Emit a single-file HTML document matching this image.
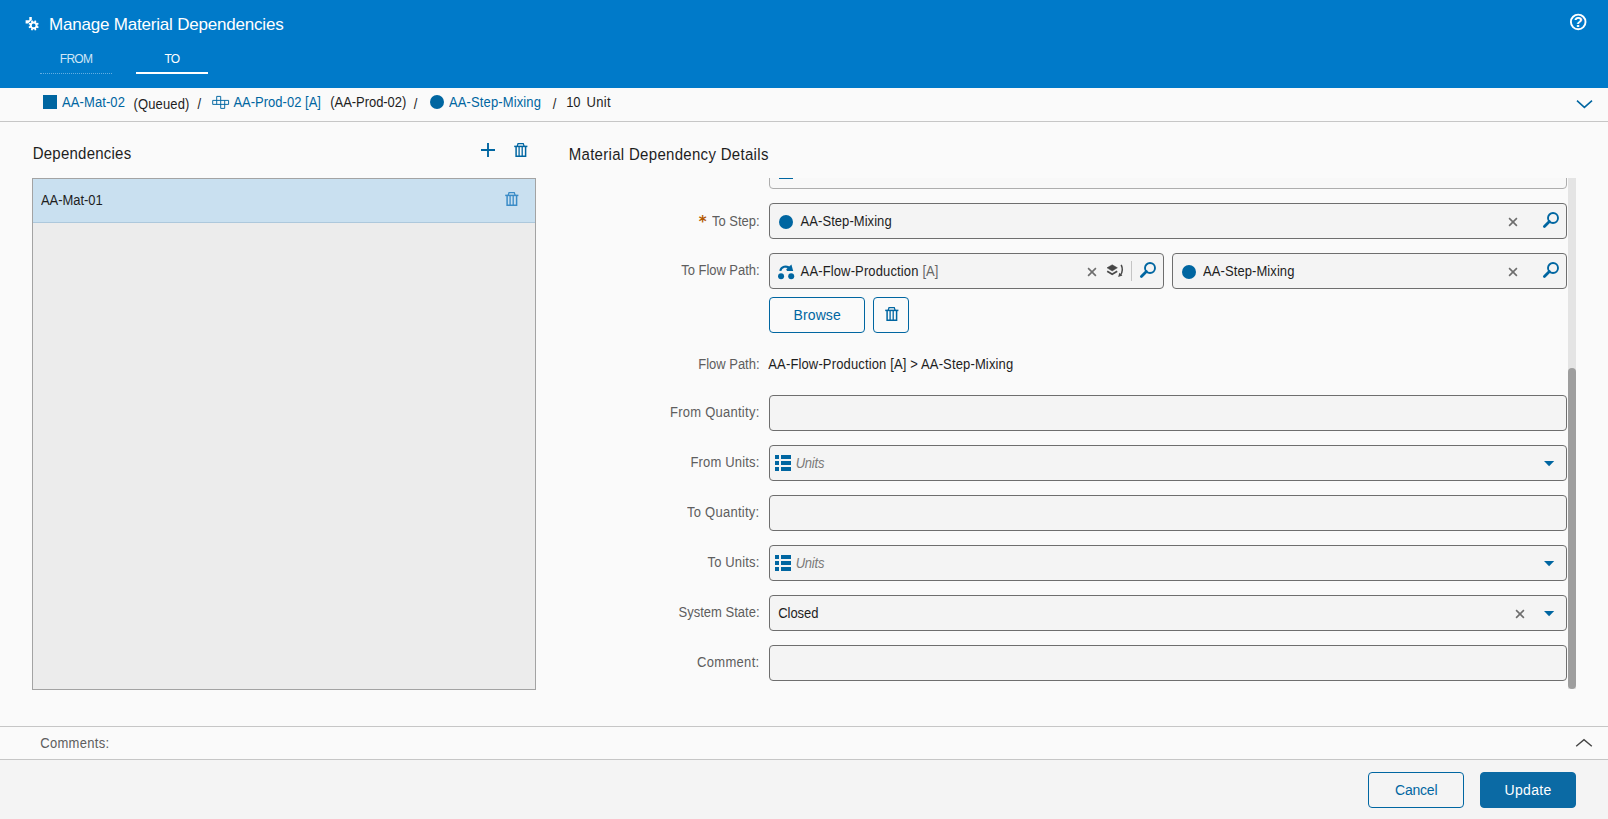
<!DOCTYPE html>
<html><head><meta charset="utf-8"><title>Manage Material Dependencies</title>
<style>
html,body{margin:0;padding:0}
body{width:1608px;height:819px;position:relative;overflow:hidden;background:#fafafa;font-family:"Liberation Sans",sans-serif}
.t{position:absolute;white-space:pre}
.i{position:absolute;display:block}
.f{position:absolute;box-sizing:border-box;border:1px solid #6e6e6e;border-radius:4px;background:#f4f4f4}
.fl{position:absolute;box-sizing:border-box;border:1px solid #adadad;border-radius:4px;background:#f8f8f8}
.b{position:absolute;box-sizing:border-box;border:1px solid #0066a1;border-radius:4px}
.hl{position:absolute;left:0;width:1608px;height:1px;background:#c6c6c6}
</style></head><body>
<div style="position:absolute;left:0;top:0;width:1608px;height:88px;background:#007ac9"></div>
<svg class="i" style="left:20px;top:10px" width="30" height="28" viewBox="20 10 30 28"><path d="M29.3 17.1 H31.8 V20.6 L30.4 21.3 L28.3 23.5 H25.6 V20.2 H29.3 Z" fill="#fff"/><path d="M37.50 26.01 L38.75 26.63 L38.13 28.14 L36.81 27.69 L35.94 28.56 L36.39 29.88 L34.88 30.50 L34.26 29.25 L33.04 29.25 L32.42 30.50 L30.91 29.88 L31.36 28.56 L30.49 27.69 L29.17 28.14 L28.55 26.63 L29.80 26.01 L29.80 24.79 L28.55 24.17 L29.17 22.66 L30.49 23.11 L31.36 22.24 L30.91 20.92 L32.42 20.30 L33.04 21.55 L34.26 21.55 L34.88 20.30 L36.39 20.92 L35.94 22.24 L36.81 23.11 L38.13 22.66 L38.75 24.17 L37.50 24.79Z M35.55 25.40 A1.9 1.9 0 1 0 31.75 25.40 A1.9 1.9 0 1 0 35.55 25.40Z" fill="#fff" fill-rule="evenodd" stroke="#007ac9" stroke-width="0.7" paint-order="stroke"/></svg>
<div style="position:absolute;left:40px;top:73px;width:72px;height:0;border-top:1px dotted #62aee2"></div>
<div style="position:absolute;left:136px;top:72px;width:72px;height:2px;background:#fff"></div>
<svg class="i" style="left:1568px;top:12px" width="20" height="20" viewBox="0 0 20 20"><circle cx="10.2" cy="9.95" r="7.3" fill="none" stroke="#fff" stroke-width="1.9"/><text x="10.2" y="14.6" text-anchor="middle" font-family="Liberation Sans, sans-serif" font-weight="bold" font-size="14.6" fill="#fff">?</text></svg>
<div class="hl" style="top:121px"></div>
<div class="i" style="left:43px;top:95px;width:14px;height:14px;background:#0066a1"></div>
<svg class="i" style="left:211px;top:94px" width="20" height="16" viewBox="211 94 20 16"><path d="M216.7 100.4 V96.4 H220.7 V100.4 M212.7 100.4 H228.6 V104.4 H212.7 Z M216.7 100.4 V104.4 M220.7 100.4 V108.4 H224.7 V100.4" fill="none" stroke="#0066a1" stroke-width="0.95"/></svg>
<div class="i" style="left:430px;top:95.2px;width:14px;height:14px;border-radius:50%;background:#0066a1"></div>
<svg class="i" style="left:1575px;top:98px" width="20" height="12" viewBox="0 0 20 12"><path d="M2 2.6 L9.4 9.4 L17 2.6" fill="none" stroke="#0066a1" stroke-width="1.5"/></svg>

<svg class="i" style="left:480px;top:142px" width="16" height="16" viewBox="0 0 16 16"><path d="M8 1 V15 M1 8 H15" stroke="#0066a1" stroke-width="1.9" fill="none"/></svg>
<svg class="i" style="left:513.8px;top:142.6px;opacity:1" width="14" height="15" viewBox="0 0 14 15"><g fill="none" stroke="#0066a1"><path d="M3.2 3.3 L4 0.7 H9.3 L10.1 3.3" stroke-width="1.2"/><path d="M0.2 3.4 H13.4" stroke-width="1.5"/><path d="M2.1 3.4 V13.3 H11.6 V3.4" stroke-width="1.5"/><path d="M5.1 3.4 V13.3 M8.2 3.4 V13.3" stroke-width="1.3"/></g></svg>
<div style="position:absolute;left:32px;top:178px;width:504px;height:512px;box-sizing:border-box;border:1px solid #a3a3a3;background:#ececec"></div>
<div style="position:absolute;left:33px;top:179px;width:502px;height:43px;background:#c9e0f0;border-bottom:1px solid #adc8dc"></div>
<svg class="i" style="left:504.6px;top:192.4px;opacity:1" width="14" height="15" viewBox="0 0 14 15"><g fill="none" stroke="#3b8cc7"><path d="M3.2 3.3 L4 0.7 H9.3 L10.1 3.3" stroke-width="1.2"/><path d="M0.2 3.4 H13.4" stroke-width="1.5"/><path d="M2.1 3.4 V13.3 H11.6 V3.4" stroke-width="1.5"/><path d="M5.1 3.4 V13.3 M8.2 3.4 V13.3" stroke-width="1.3"/></g></svg>

<div class="fl" style="left:769px;top:150px;width:798px;height:39px"></div>
<div class="i" style="left:779px;top:177px;width:14px;height:2.4px;background:#0066a1"></div>
<div style="position:absolute;left:560px;top:140px;width:1040px;height:38px;background:#fafafa"></div>

<div class="f" style="left:769px;top:203px;width:798px;height:36px"></div>
<div class="i" style="left:779.2px;top:214.7px;width:14px;height:14px;border-radius:50%;background:#0066a1"></div>
<svg class="i" style="left:1507px;top:215.8px" width="12" height="12" viewBox="0 0 12 12"><path d="M2.1 2.1 L9.9 9.9 M9.9 2.1 L2.1 9.9" stroke="#6e6e6e" stroke-width="1.6" fill="none"/></svg>
<svg class="i" style="left:1541px;top:209.8px" width="20" height="20" viewBox="0 0 20 20"><circle cx="12" cy="8" r="5" fill="none" stroke="#0066a1" stroke-width="1.9"/><path d="M8.4 11.6 L3.4 16.6" stroke="#0066a1" stroke-width="2.8" stroke-linecap="round"/></svg>
<div class="f" style="left:769px;top:253px;width:395px;height:36px"></div>
<svg class="i" style="left:776px;top:262px" width="20" height="20" viewBox="776 262 20 20"><circle cx="781.05" cy="276.3" r="3" fill="#0066a1"/><circle cx="791.2" cy="276.3" r="3" fill="#0066a1"/><path d="M780.3 270.9 C781 266.5 786.5 265.3 790 268.2" fill="none" stroke="#0066a1" stroke-width="2.1"/><path d="M791.4 264.6 L793.2 271.1 L787 270.9 L786.2 269.3 Z" fill="#0066a1"/></svg>
<svg class="i" style="left:1085.7px;top:265.8px" width="12" height="12" viewBox="0 0 12 12"><path d="M2.1 2.1 L9.9 9.9 M9.9 2.1 L2.1 9.9" stroke="#6e6e6e" stroke-width="1.6" fill="none"/></svg>
<svg class="i" style="left:1104px;top:262px" width="22" height="18" viewBox="1104 262 22 18"><path d="M1107 267.8 L1112.2 264.8 L1117.4 267.8 L1112.2 271 Z" fill="#454545" stroke="#454545" stroke-width="0.5"/><path d="M1107.2 271.3 L1112.2 274.3 L1117.2 271.3" fill="none" stroke="#4a4a4a" stroke-width="1.8"/><path d="M1121.2 264.9 C1122.9 268.5 1122.5 272.3 1120.4 275.2" fill="none" stroke="#4a4a4a" stroke-width="1.5"/><path d="M1118.2 277 L1119.3 272.8 L1122.4 275.4 Z" fill="#4a4a4a"/></svg>
<div class="i" style="left:1131px;top:261px;width:1px;height:20px;background:#c4c4c4"></div>
<svg class="i" style="left:1138px;top:260.0px" width="20" height="20" viewBox="0 0 20 20"><circle cx="12" cy="8" r="5" fill="none" stroke="#0066a1" stroke-width="1.9"/><path d="M8.4 11.6 L3.4 16.6" stroke="#0066a1" stroke-width="2.8" stroke-linecap="round"/></svg>
<div class="f" style="left:1172px;top:253px;width:395px;height:36px"></div>
<div class="i" style="left:1182px;top:264.7px;width:14px;height:14px;border-radius:50%;background:#0066a1"></div>
<svg class="i" style="left:1507px;top:265.8px" width="12" height="12" viewBox="0 0 12 12"><path d="M2.1 2.1 L9.9 9.9 M9.9 2.1 L2.1 9.9" stroke="#6e6e6e" stroke-width="1.6" fill="none"/></svg>
<svg class="i" style="left:1541px;top:259.8px" width="20" height="20" viewBox="0 0 20 20"><circle cx="12" cy="8" r="5" fill="none" stroke="#0066a1" stroke-width="1.9"/><path d="M8.4 11.6 L3.4 16.6" stroke="#0066a1" stroke-width="2.8" stroke-linecap="round"/></svg>
<div class="b" style="left:769px;top:297px;width:96px;height:36px"></div>
<div class="b" style="left:873px;top:297px;width:36px;height:36px"></div>
<svg class="i" style="left:884.8px;top:306.6px;opacity:1" width="14" height="15" viewBox="0 0 14 15"><g fill="none" stroke="#0066a1"><path d="M3.2 3.3 L4 0.7 H9.3 L10.1 3.3" stroke-width="1.2"/><path d="M0.2 3.4 H13.4" stroke-width="1.5"/><path d="M2.1 3.4 V13.3 H11.6 V3.4" stroke-width="1.5"/><path d="M5.1 3.4 V13.3 M8.2 3.4 V13.3" stroke-width="1.3"/></g></svg>
<div class="f" style="left:769px;top:395px;width:798px;height:36px"></div>
<div class="f" style="left:769px;top:445px;width:798px;height:36px"></div>
<svg class="i" style="left:775px;top:455px" width="16" height="16" viewBox="0 0 16 16" fill="#0066a1"><rect x="0" y="0" width="4" height="4"/><rect x="6" y="0" width="10" height="4"/><rect x="0" y="6" width="4" height="4"/><rect x="6" y="6" width="10" height="4"/><rect x="0" y="12" width="4" height="4"/><rect x="6" y="12" width="10" height="4"/></svg>
<svg class="i" style="left:1544px;top:461px" width="11" height="6" viewBox="0 0 11 6"><path d="M0 0 H10.2 L5.1 5.3 Z" fill="#0066a1"/></svg>
<div class="f" style="left:769px;top:495px;width:798px;height:36px"></div>
<div class="f" style="left:769px;top:545px;width:798px;height:36px"></div>
<svg class="i" style="left:775px;top:555px" width="16" height="16" viewBox="0 0 16 16" fill="#0066a1"><rect x="0" y="0" width="4" height="4"/><rect x="6" y="0" width="10" height="4"/><rect x="0" y="6" width="4" height="4"/><rect x="6" y="6" width="10" height="4"/><rect x="0" y="12" width="4" height="4"/><rect x="6" y="12" width="10" height="4"/></svg>
<svg class="i" style="left:1544px;top:561px" width="11" height="6" viewBox="0 0 11 6"><path d="M0 0 H10.2 L5.1 5.3 Z" fill="#0066a1"/></svg>
<div class="f" style="left:769px;top:595px;width:798px;height:36px"></div>
<svg class="i" style="left:1513.5px;top:608.4px" width="12" height="12" viewBox="0 0 12 12"><path d="M2.1 2.1 L9.9 9.9 M9.9 2.1 L2.1 9.9" stroke="#6e6e6e" stroke-width="1.6" fill="none"/></svg>
<svg class="i" style="left:1544px;top:611px" width="11" height="6" viewBox="0 0 11 6"><path d="M0 0 H10.2 L5.1 5.3 Z" fill="#0066a1"/></svg>
<div class="f" style="left:769px;top:645px;width:798px;height:36px"></div>
<div class="i" style="left:1568px;top:178px;width:8px;height:511px;background:#e4e4e4"></div>
<div class="i" style="left:1568px;top:368px;width:8px;height:321px;background:#9e9e9e;border-radius:4px"></div>

<div class="hl" style="top:726px"></div>
<div class="hl" style="top:759px"></div>
<div style="position:absolute;left:0;top:760px;width:1608px;height:59px;background:#f4f4f4"></div>
<svg class="i" style="left:1574px;top:736px" width="20" height="14" viewBox="0 0 20 14"><path d="M2.2 10.2 L10 3.6 L17.8 10.2" fill="none" stroke="#444" stroke-width="1.4"/></svg>
<div class="b" style="left:1368px;top:772px;width:96px;height:36px"></div>
<div class="b" style="left:1480px;top:772px;width:96px;height:36px;background:#0b6aa4;border-color:#0b6aa4"></div>
<div class="t" id="title" style="left:49.00px;top:16px;font-size:17px;line-height:17px;color:#fff;letter-spacing:-0.198px;">Manage Material Dependencies</div>
<div class="t" id="from" style="left:59.80px;top:53px;font-size:12px;line-height:12px;color:#cfe6f6;letter-spacing:-0.732px;">FROM</div>
<div class="t" id="to" style="left:164.50px;top:53px;font-size:12px;line-height:12px;color:#fff;letter-spacing:-0.827px;">TO</div>
<div class="t" id="b1" style="left:62.00px;top:96px;font-size:13px;line-height:13px;color:#0066a1;letter-spacing:0.095px;transform:scaleY(1.075);transform-origin:0 11px;">AA-Mat-02</div>
<div class="t" id="b2" style="left:133.50px;top:98px;font-size:13px;line-height:13px;color:#1e1e1e;letter-spacing:0.135px;transform:scaleY(1.075);transform-origin:0 11px;">(Queued)</div>
<div class="t" id="b3" style="left:197.60px;top:98px;font-size:13px;line-height:13px;color:#1e1e1e;letter-spacing:1.375px;transform:scaleY(1.075);transform-origin:0 11px;">/</div>
<div class="t" id="b4" style="left:233.40px;top:96px;font-size:13px;line-height:13px;color:#0066a1;letter-spacing:0.012px;transform:scaleY(1.075);transform-origin:0 11px;">AA-Prod-02 [A]</div>
<div class="t" id="b5" style="left:330.30px;top:96px;font-size:13px;line-height:13px;color:#1e1e1e;letter-spacing:-0.057px;transform:scaleY(1.075);transform-origin:0 11px;">(AA-Prod-02)</div>
<div class="t" id="b6" style="left:413.80px;top:98px;font-size:13px;line-height:13px;color:#1e1e1e;letter-spacing:1.375px;transform:scaleY(1.075);transform-origin:0 11px;">/</div>
<div class="t" id="b7" style="left:449.00px;top:96px;font-size:13px;line-height:13px;color:#0066a1;letter-spacing:0.121px;transform:scaleY(1.075);transform-origin:0 11px;">AA-Step-Mixing</div>
<div class="t" id="b8" style="left:552.70px;top:98px;font-size:13px;line-height:13px;color:#1e1e1e;letter-spacing:1.375px;transform:scaleY(1.075);transform-origin:0 11px;">/</div>
<div class="t" id="b9" style="left:566.30px;top:96px;font-size:13px;line-height:13px;color:#1e1e1e;letter-spacing:-0.384px;transform:scaleY(1.075);transform-origin:0 11px;">10</div>
<div class="t" id="b10" style="left:586.50px;top:96px;font-size:13px;line-height:13px;color:#1e1e1e;letter-spacing:0.319px;transform:scaleY(1.075);transform-origin:0 11px;">Unit</div>
<div class="t" id="dep" style="left:32.70px;top:146px;font-size:15px;line-height:15px;color:#1e1e1e;letter-spacing:0.233px;transform:scaleY(1.07);transform-origin:0 13px;">Dependencies</div>
<div class="t" id="mdd" style="left:568.70px;top:147px;font-size:15px;line-height:15px;color:#1e1e1e;letter-spacing:0.305px;transform:scaleY(1.07);transform-origin:0 13px;">Material Dependency Details</div>
<div class="t" id="mat01" style="left:41.00px;top:194px;font-size:13px;line-height:13px;color:#1e1e1e;letter-spacing:-0.060px;transform:scaleY(1.075);transform-origin:0 11px;">AA-Mat-01</div>
<div class="t" id="l1" style="left:712.10px;top:215px;font-size:13px;line-height:13px;color:#5e5e5e;letter-spacing:-0.038px;transform:scaleY(1.075);transform-origin:0 11px;">To Step:</div>
<div class="t" id="l2" style="left:681.30px;top:264px;font-size:13px;line-height:13px;color:#5e5e5e;letter-spacing:-0.044px;transform:scaleY(1.075);transform-origin:0 11px;">To Flow Path:</div>
<div class="t" id="l3" style="left:698.30px;top:358px;font-size:13px;line-height:13px;color:#5e5e5e;letter-spacing:-0.022px;transform:scaleY(1.075);transform-origin:0 11px;">Flow Path:</div>
<div class="t" id="l4" style="left:670.00px;top:406px;font-size:13px;line-height:13px;color:#5e5e5e;letter-spacing:0.252px;transform:scaleY(1.075);transform-origin:0 11px;">From Quantity:</div>
<div class="t" id="l5" style="left:690.40px;top:456px;font-size:13px;line-height:13px;color:#5e5e5e;letter-spacing:0.175px;transform:scaleY(1.075);transform-origin:0 11px;">From Units:</div>
<div class="t" id="l6" style="left:687.00px;top:506px;font-size:13px;line-height:13px;color:#5e5e5e;letter-spacing:0.260px;transform:scaleY(1.075);transform-origin:0 11px;">To Quantity:</div>
<div class="t" id="l7" style="left:707.50px;top:556px;font-size:13px;line-height:13px;color:#5e5e5e;letter-spacing:0.158px;transform:scaleY(1.075);transform-origin:0 11px;">To Units:</div>
<div class="t" id="l8" style="left:678.50px;top:606px;font-size:13px;line-height:13px;color:#5e5e5e;letter-spacing:0.006px;transform:scaleY(1.075);transform-origin:0 11px;">System State:</div>
<div class="t" id="l9" style="left:697.00px;top:656px;font-size:13px;line-height:13px;color:#5e5e5e;letter-spacing:0.316px;transform:scaleY(1.075);transform-origin:0 11px;">Comment:</div>
<div class="t" id="v1" style="left:800.60px;top:215px;font-size:13px;line-height:13px;color:#1e1e1e;letter-spacing:0.056px;transform:scaleY(1.075);transform-origin:0 11px;">AA-Step-Mixing</div>
<div class="t" id="v2" style="left:800.60px;top:265px;font-size:13px;line-height:13px;color:#1e1e1e;letter-spacing:0.133px;transform:scaleY(1.075);transform-origin:0 11px;">AA-Flow-Production</div>
<div class="t" id="v2b" style="left:922.40px;top:265px;font-size:13px;line-height:13px;color:#666;letter-spacing:-0.002px;transform:scaleY(1.075);transform-origin:0 11px;">[A]</div>
<div class="t" id="v3" style="left:1203.00px;top:265px;font-size:13px;line-height:13px;color:#1e1e1e;letter-spacing:0.085px;transform:scaleY(1.075);transform-origin:0 11px;">AA-Step-Mixing</div>
<div class="t" id="browse" style="left:793.60px;top:308px;font-size:14px;line-height:14px;color:#0066a1;letter-spacing:0.085px;">Browse</div>
<div class="t" id="fp" style="left:768.30px;top:358px;font-size:13px;line-height:13px;color:#1e1e1e;letter-spacing:0.141px;transform:scaleY(1.075);transform-origin:0 11px;">AA-Flow-Production [A] &gt; AA-Step-Mixing</div>
<div class="t" id="u1" style="left:795.70px;top:457px;font-size:13px;line-height:13px;color:#7a7a7a;letter-spacing:-0.225px;transform:scaleY(1.075);transform-origin:0 11px;font-style:italic;">Units</div>
<div class="t" id="u2" style="left:795.70px;top:557px;font-size:13px;line-height:13px;color:#7a7a7a;letter-spacing:-0.225px;transform:scaleY(1.075);transform-origin:0 11px;font-style:italic;">Units</div>
<div class="t" id="closed" style="left:778.20px;top:607px;font-size:13px;line-height:13px;color:#1e1e1e;letter-spacing:-0.028px;transform:scaleY(1.075);transform-origin:0 11px;">Closed</div>
<div class="t" id="comments" style="left:40.20px;top:737px;font-size:13px;line-height:13px;color:#5e5e5e;letter-spacing:0.303px;transform:scaleY(1.075);transform-origin:0 11px;">Comments:</div>
<div class="t" id="cancel" style="left:1395.00px;top:783px;font-size:14px;line-height:14px;color:#0066a1;letter-spacing:-0.216px;">Cancel</div>
<div class="t" id="update" style="left:1504.60px;top:783px;font-size:14px;line-height:14px;color:#fff;letter-spacing:0.291px;">Update</div>
<div class="t" id="star" style="left:698.7px;top:215.4px;font-family:'DejaVu Sans',sans-serif;font-weight:bold;font-size:15px;line-height:15px;color:#b25900">*</div>
</body></html>
